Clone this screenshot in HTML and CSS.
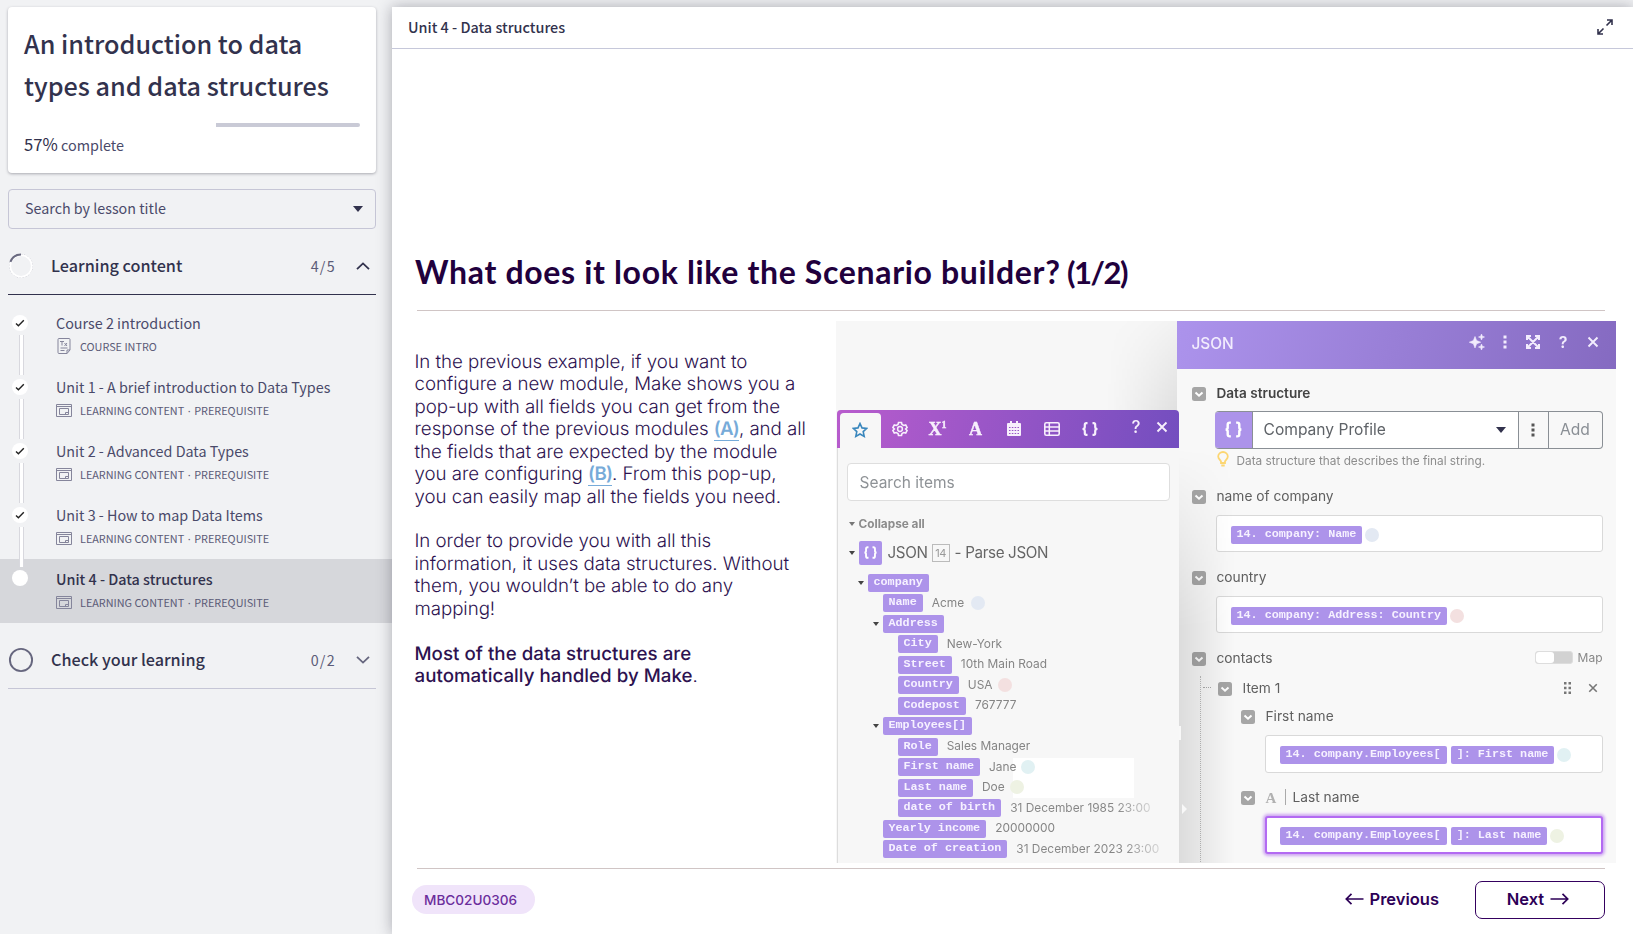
FILE: index.html
```
<!DOCTYPE html>
<html lang="en">
<head>
<meta charset="utf-8">
<title>An introduction to data types and data structures</title>
<link rel="stylesheet" href="styles.css">
</head>
<body>
<svg class="defs" aria-hidden="true">
  <symbol id="tick" viewBox="0 0 10 8"><path d="M1 4.4 3.4 6.7 8.8 1.2" fill="none" stroke="currentColor" stroke-width="1.4"/></symbol>
  <symbol id="lesson" viewBox="0 0 16 13"><path d="M.5.5h15v12H.5zM.5 2.5h15M3.5 4.500h9v6h-9zM9.500 10.500V8.500h3" fill="none" stroke="currentColor" stroke-width="1"/></symbol>
  <symbol id="check" viewBox="0 0 14 14"><rect width="14" height="14" rx="2.500" fill="#a6a6a6"/><path d="m3.500 5.500 3.500 3.200 3.500-3.200" fill="none" stroke="#fff" stroke-width="2"/></symbol>
  <symbol id="braces" viewBox="0 0 18 16"><path d="M6.500 1.500H5.500Q3.500 1.500 3.500 3.500V6Q3.500 8 1.500 8 3.500 8 3.500 10v2.500q0 2 2 2h1M11.500 1.500h1q2 0 2 2V6q0 2 2 2-2 0-2 2v2.500q0 2-2 2h-1" fill="none" stroke="currentColor" stroke-width="2.300"/></symbol>
  <symbol id="close" viewBox="0 0 12 12"><path d="m1.500 1.500 9 9m0-9-9 9" fill="none" stroke="currentColor" stroke-width="1.900"/></symbol>
  <symbol id="dots" viewBox="0 0 4 14"><path d="M.5.5h3v3h-3zM.5 5.500h3v3h-3zM.5 10.500h3v3h-3z" fill="currentColor"/></symbol>
</svg>
<div class="app">
  <aside class="sidebar">
    <section class="card">
      <h1>An introduction to data<br>types and data structures</h1>
      <div class="progress"><i></i></div>
      <p><b>57%</b> complete</p>
    </section>
    <div class="search"><span>Search by lesson title</span><i class="caret-big"></i></div>
    <div class="section first">
      <svg class="ring" viewBox="0 0 26 26"><circle cx="13" cy="13" r="11.500" fill="none" stroke="#b9b9c4" stroke-width="1" stroke-dasharray="1.500 1.500"/><circle cx="13" cy="13" r="10.800" fill="none" stroke="#fff" stroke-width="1.800"/><path d="M2.400 8.800A11.400 11.400 0 0 1 13 1.600" fill="none" stroke="#6a6a80" stroke-width="2"/></svg>
      <h2>Learning content</h2><span>4/5</span>
      <svg class="chev" viewBox="0 0 14 8"><path d="m1 7.200 6-5.800 6 5.800" fill="none" stroke="#32324d" stroke-width="1.800"/></svg>
    </div>
    <ul class="lessons">
      <li class="intro"><i class="dot"><svg><use href="#tick"/></svg></i><div><h3>Course 2 introduction</h3><p><svg class="doc" viewBox="0 0 14 16"><path d="M2 .5h10q1 0 1 1V12l-3 3.500H2q-1 0-1-1v-13q0-1 1-1zM13 12h-3v3.500M3 3.500h4M5 3.500v4M7.500 5l2.500 3m0-3-2.500 3M3.500 10h7M3.500 12.500h4" fill="none" stroke="currentColor"/></svg>COURSE INTRO</p></div></li>
      <li><i class="dot"><svg><use href="#tick"/></svg></i><div><h3>Unit 1 - A brief introduction to Data Types</h3><p><svg><use href="#lesson"/></svg>LEARNING CONTENT<em>·</em>PREREQUISITE</p></div></li>
      <li><i class="dot"><svg><use href="#tick"/></svg></i><div><h3>Unit 2 - Advanced Data Types</h3><p><svg><use href="#lesson"/></svg>LEARNING CONTENT<em>·</em>PREREQUISITE</p></div></li>
      <li><i class="dot"><svg><use href="#tick"/></svg></i><div><h3>Unit 3 - How to map Data Items</h3><p><svg><use href="#lesson"/></svg>LEARNING CONTENT<em>·</em>PREREQUISITE</p></div></li>
      <li class="active"><i class="dot"></i><div><h3>Unit 4 - Data structures</h3><p><svg><use href="#lesson"/></svg>LEARNING CONTENT<em>·</em>PREREQUISITE</p></div></li>
    </ul>
    <div class="section last">
      <svg class="ring" viewBox="0 0 26 26"><circle cx="13" cy="13" r="11.100" fill="none" stroke="#66667e" stroke-width="1.900"/></svg>
      <h2>Check your learning</h2><span>0/2</span>
      <svg class="chev" viewBox="0 0 14 8"><path d="m1 .8 6 5.800 6-5.800" fill="none" stroke="#66667e" stroke-width="1.800"/></svg>
    </div>
  </aside>
  <main class="main">
    <header class="bar"><span>Unit 4 - Data structures</span>
      <svg viewBox="0 0 16 16"><path d="M9.500 6.500 15 1M10 1h5v5M6.500 9.500 1 15M1 10v5h5" fill="none" stroke="#32324d" stroke-width="1.600"/></svg>
    </header>
    <div class="slide">
      <h2 class="title">What does it look like the Scenario builder? <span>(1/2)</span></h2>
      <div class="content">
        <div class="copy">
          <p>In the previous example, if you want to<br>configure a new module, Make shows you a<br>pop-up with all fields you can get from the<br>response of the previous modules <a>(A)</a>, and all<br>the fields that are expected by the module<br>you are configuring <a>(B)</a>. From this pop-up,<br>you can easily map all the fields you need.</p>
          <p>In order to provide you with all this<br>information, it uses data structures. Without<br>them, you wouldn’t be able to do any<br>mapping!</p>
          <p><b>Most of the data structures are<br>automatically handled by Make</b>.</p>
        </div>
        <div class="demo">
          <div class="shade"></div>
          <section class="window">
            <header class="w-head"><h3>JSON</h3>
              <svg width="16" height="16" viewBox="0 0 16 16"><path d="M6 2.500 7.600 6.600 11.700 8.200 7.600 9.800 6 14 4.400 9.800.300 8.200 4.400 6.600zM12.500 0l.8 2.200 2.200.8-2.200.8-.8 2.200-.8-2.200L9.500 3l2.200-.8zM12.500 10l.8 2.200 2.200.8-2.200.8-.8 2.200-.8-2.200-2.200-.8 2.200-.8z" fill="currentColor" stroke="currentColor" stroke-width=".6"/></svg>
              <svg width="4" height="14"><use href="#dots"/></svg>
              <svg width="14" height="14" viewBox="0 0 14 14"><path d="M1 5V1h4M9 1h4v4M13 9v4H9M5 13H1V9M1.500 1.500l11 11m0-11-11 11" fill="none" stroke="currentColor" stroke-width="2"/></svg>
              <b>?</b>
              <svg width="12" height="12"><use href="#close"/></svg>
            </header>
            <div class="w-body">
              <div class="label strong"><svg><use href="#check"/></svg>Data structure</div>
              <div class="picker"><i><svg width="19" height="17"><use href="#braces"/></svg></i><span>Company Profile<u class="caret-big"></u></span><em><svg width="4" height="14"><use href="#dots"/></svg></em><b>Add</b></div>
              <div class="hint"><svg width="12" height="16" viewBox="0 0 12 16"><path d="M4 12v-1.500C3.500 9 1.200 8 1.200 5.500a4.800 4.500 0 0 1 9.600 0C10.800 8 8.500 9 8 10.500V12zM4.300 14.500h3.400" fill="none" stroke="#fcd672" stroke-width="1.800"/></svg>Data structure that describes the final string.</div>
              <div class="label l-name"><svg><use href="#check"/></svg>name of company</div>
              <div class="input"><code>14. company: Name</code><i class="pt blue"></i></div>
              <div class="label l-country"><svg><use href="#check"/></svg>country</div>
              <div class="input"><code>14. company: Address: Country</code><i class="pt red"></i></div>
              <div class="label l-contacts"><svg><use href="#check"/></svg>contacts<span class="toggle"><i></i></span><small>Map</small></div>
              <div class="nest">
                <div class="label l-item"><svg><use href="#check"/></svg>Item 1<svg class="drag" viewBox="0 0 7 12"><path d="M0 0h2.500v2.500H0zM4.500 0H7v2.500H4.500zM0 4.700h2.500v2.500H0zM4.500 4.700H7v2.500H4.500zM0 9.400h2.500v2.500H0zM4.500 9.400H7v2.500H4.500z" fill="#777"/></svg><svg class="rm"><use href="#close"/></svg></div>
                <div class="label l-first"><svg><use href="#check"/></svg>First name</div>
                <div class="input deep"><code>14. company.Employees[</code><code>]: First name</code><i class="pt cyan"></i></div>
                <div class="label l-last"><svg><use href="#check"/></svg><span class="glyph">A</span>Last name</div>
                <div class="input deep focus"><code>14. company.Employees[</code><code>]: Last name</code><i class="pt green"></i></div>
              </div>
            </div>
          </section>
          <div class="cast"></div>
          <svg class="marks" viewBox="0 0 8 90"><path d="M0 0h2v14H0zM3 78l5 5-5 5z" fill="#f8f8f8"/></svg>
          <section class="picker-pop">
            <header class="tabs">
              <span class="on"><svg width="16" height="16" viewBox="0 0 16 16"><path d="m8 1.500 2 4.400 4.700.5-3.500 3.200 1 4.800L8 12l-4.200 2.400 1-4.800L1.300 6.400 6 5.900z" fill="none" stroke="#3a87bd" stroke-width="1.600"/></svg></span>
              <span><svg width="16" height="16" viewBox="0 0 16 16"><path d="M6.500 1.500h3l.5 2 1.700 1 2-.6 1.400 2.600L13.600 8l1.500 1.500-1.400 2.600-2-.6-1.700 1-.5 2h-3l-.5-2-1.700-1-2 .6L.9 9.500 2.400 8 .9 6.500l1.400-2.600 2 .6 1.700-1z" fill="none" stroke="currentColor" stroke-width="1.600"/><circle cx="8" cy="8" r="2.400" fill="none" stroke="currentColor" stroke-width="1.500"/></svg></span>
              <span class="serif">X<sup>1</sup></span>
              <span class="serif">A</span>
              <span><svg width="14" height="15" viewBox="0 0 14 15"><path d="M0 3q0-1 1-1h2V0h2v2h4V0h2v2h2q1 0 1 1v11q0 1-1 1H1q-1 0-1-1z" fill="currentColor"/><path d="M2 6.500h10M2 9.500h10M2 12.500h10" stroke="#9856c6" stroke-width="1.200" stroke-dasharray="1.500 1.333"/></svg></span>
              <span><svg width="16" height="14" viewBox="0 0 16 14"><rect x=".8" y=".8" width="14.400" height="12.400" rx="1.500" fill="none" stroke="currentColor" stroke-width="1.600"/><path d="M5.300 1v12M1 5h14M1 9h14" stroke="currentColor" stroke-width="1.500"/></svg></span>
              <span><svg width="18" height="14" viewBox="0 0 18 14"><path d="M6.500 1.200H5.300Q3.800 1.200 3.800 2.700V5Q3.800 7 1.500 7 3.800 7 3.800 9v2.300q0 1.500 1.500 1.500h1.200M11.500 1.200h1.200q1.500 0 1.500 1.500V5q0 2 2.300 2-2.300 0-2.300 2v2.300q0 1.500-1.500 1.500h-1.200" fill="none" stroke="currentColor" stroke-width="2.200"/></svg></span>
              <b>?</b><svg width="12" height="12"><use href="#close"/></svg>
            </header>
            <div class="find">Search items</div>
            <div class="collapse"><i class="caret"></i>Collapse all</div>
            <div class="module"><i class="caret"></i><i class="sq"><svg width="17" height="13"><use href="#braces"/></svg></i>JSON<small>14</small>- Parse JSON</div>
            <div class="patch"></div>
            <ul class="tree">
              <li><i class="caret"></i><code>company</code></li>
              <li class="d1"><code>Name</code><span>Acme</span><i class="pt blue sp"></i></li>
              <li class="d1"><i class="caret"></i><code>Address</code></li>
              <li class="d2"><code>City</code><span>New-York</span></li>
              <li class="d2"><code>Street</code><span>10th Main Road</span></li>
              <li class="d2"><code>Country</code><span>USA</span><i class="pt red"></i></li>
              <li class="d2"><code>Codepost</code><span>767777</span></li>
              <li class="d1"><i class="caret"></i><code>Employees[]</code></li>
              <li class="d2"><code>Role</code><span>Sales Manager</span></li>
              <li class="d2"><code>First name</code><span>Jane</span><i class="pt cyan"></i></li>
              <li class="d2"><code>Last name</code><span>Doe</span><i class="pt green"></i></li>
              <li class="d2"><code>date of birth</code><span class="fade">31 December 1985 23:00</span></li>
              <li class="d1"><code>Yearly income</code><span>20000000</span></li>
              <li class="d1"><code>Date of creation</code><span class="fade">31 December 2023 23:00</span></li>
            </ul>
          </section>
        </div>
      </div>
      <footer class="foot">
        <span class="badge">MBC02U0306</span>
        <span class="prev"><svg viewBox="0 0 19 12"><path d="M18.500 6H1.500M6.500.8 1.300 6l5.200 5.200" fill="none" stroke="currentColor" stroke-width="1.700"/></svg>Previous</span>
        <span class="next">Next<svg viewBox="0 0 19 12"><path d="M.5 6h17M12.500.8 17.700 6l-5.200 5.200" fill="none" stroke="currentColor" stroke-width="1.700"/></svg></span>
      </footer>
    </div>
  </main>
</div>
</body>
</html>
```
FILE: styles.css
```
* { box-sizing: border-box; margin: 0; padding: 0; }
body { width: 1633px; height: 934px; overflow: hidden; background: #f1f2f4; font-family: "Noto Sans CJK SC", "Noto Sans", sans-serif; color: #32324d; }
i, em { font-style: normal; }
ul { list-style: none; }
svg { display: block; flex: none; }
.defs { position: absolute; width: 0; height: 0; }
.app { display: flex; height: 934px; }

/* Sidebar */
.sidebar { width: 392px; flex: none; padding-top: 7px; }
.card { width: 368px; height: 166px; margin-left: 8px; padding: 15px 16px 0; background: #fff; border-radius: 4px; box-shadow: 0 1px 3px rgba(33, 33, 52, .35); }
.card h1 { font-size: 25.2px; line-height: 42px; font-weight: 500; white-space: nowrap; }
.progress { height: 4px; margin-top: 17px; display: flex; justify-content: flex-end; }
.progress i { width: 144px; height: 4px; background: #c9cad6; border-radius: 0 2px 2px 0; }
.card p { margin-top: 4px; font-size: 14.4px; line-height: 26px; color: #4a4a6a; }
.card b { font-size: 16.6px; font-weight: 400; color: #32324d; }
.search { display: flex; align-items: center; justify-content: space-between; width: 368px; height: 40px; margin: 16px 0 0 8px; padding: 0 12px 0 16px; border: 1px solid #c6c6d6; border-radius: 4px; font-size: 14.3px; color: #4a4a6a; }
.search span { padding-bottom: 3px; }
.caret-big { width: 0; height: 0; border: 5px solid transparent; border-top: 6px solid #32324d; border-bottom: 0; }
.section { display: flex; align-items: center; width: 368px; margin-left: 8px; }
.section.first { height: 66px; padding-top: 8px; border-bottom: 1px solid #32324d; }
.section.last { height: 66px; padding-top: 8px; border-bottom: 1px solid #c6c6d6; }
.ring { width: 26px; height: 26px; }
.section h2 { flex: 1; margin: -2px 0 0 17px; font-size: 16.2px; font-weight: 500; line-height: 24px; }
.section span { font-size: 14.3px; letter-spacing: 1.3px; color: #5c5c78; }
.chev { width: 14px; height: 8px; margin: 0 6px 0 20px; }
.lessons { padding-top: 8px; }
.lessons li { position: relative; display: flex; height: 64px; padding: 7px 0 0 12px; color: #4a4a6a; }
.lessons li:not(.active)::after { content: ""; position: absolute; left: 19px; top: 32px; width: 3px; height: 40px; z-index: 1; background: #fff; border: solid #d8d8de; border-width: 0 1px; }
.lessons li.active { background: #d6d7db; }
.dot { display: grid; place-items: center; width: 16px; height: 16px; margin: 5px 28px 0 0; border-radius: 50%; background: #fff; color: #222; }
.active .dot { margin-top: 4px; }
.dot svg { width: 10px; height: 8px; }
.lessons h3 { margin-bottom: 1px; font-size: 14.35px; font-weight: 400; line-height: 25px; white-space: nowrap; }
.active h3 { font-weight: 500; color: #32324d; }
.lessons p { display: flex; align-items: center; height: 20px; font-size: 10.85px; white-space: pre; color: #5b5b77; }
.lessons p svg { width: 16px; height: 13px; margin-right: 8px; color: #85859b; }
.lessons p .doc { width: 14px; height: 16px; margin: 0 9px 0 1px; }
.lessons em { flex: none; width: 10px; text-align: center; font-family: "Noto Sans", sans-serif; }

/* Main */
.main { position: relative; flex: 1; min-width: 0; margin-top: 7px; background: #fff; box-shadow: 0 0 14px rgba(33, 33, 52, .35); }
.bar { display: flex; align-items: center; justify-content: space-between; height: 42px; padding: 0 20px 0 16px; border-bottom: 1px solid #c6c8da; font-size: 14.4px; font-weight: 500; }
.bar span { padding-bottom: 2px; }
.bar svg { width: 16px; height: 16px; margin-top: -1px; }
.slide { padding: 196px 28px 0 23px; font-family: Inter, "Liberation Sans", sans-serif; }
.title { height: 66px; padding-top: 7px; font-family: Lato, Inter, sans-serif; font-size: 32px; line-height: 40px; font-weight: 700; letter-spacing: .66px; color: #21003d; white-space: nowrap; border-bottom: 1px solid #d0c5c5; border-image: linear-gradient(90deg, transparent 3px, #d0c5c5 3px) 1; }
.title span { margin-left: -2px; font-size: 31px; letter-spacing: -1.5px; }
.content { display: flex; height: 558px; border-bottom: 1px solid; border-image: linear-gradient(90deg, transparent 3px, #d0c5c5 3px) 1; }
.copy { width: 421px; flex: none; margin-left: -.5px; padding-top: 40px; font-size: 18.7px; line-height: 22.43px; font-weight: 300; letter-spacing: -.05px; color: #2d1250; white-space: nowrap; text-rendering: geometricPrecision; }
.copy p { margin-bottom: 22.43px; }
.copy b { font-weight: 500; letter-spacing: .04px; }
.copy a { color: #77abd9; font-weight: 600; letter-spacing: -.8px; border-bottom: 1.5px solid #77abd9; }

/* Product view */
.demo { position: relative; flex: none; width: 780px; height: 542px; margin-top: 9.5px; background: #f7f7f7; overflow: hidden; filter: blur(.4px); }
.shade { position: absolute; left: 271px; top: 0; width: 70px; height: 542px; background: linear-gradient(90deg, transparent, rgba(0,0,0,.1)); -webkit-mask: linear-gradient(160deg, transparent, #000 120px); }
.window { position: absolute; left: 341px; top: 0; width: 439px; height: 542px; background: #f8f8f8; }
.w-head { display: flex; align-items: center; height: 48px; padding: 0 17px 5px 15px; background: linear-gradient(105deg, #ac93ec, #856ac1); color: #f2ecfd; }
.w-head h3 { flex: 1; padding-top: 3px; font-size: 15.4px; font-weight: 500; }
.w-head svg:nth-of-type(2) { margin: 0 19px 0 18px; }
.w-head b { margin: 0 19px 0 19px; font-size: 16px; font-weight: 600; }
.w-body { padding: 12px 13px 0 38px; position: relative; }
.label { display: flex; align-items: center; height: 24px; margin-left: -23px; font-size: 13.75px; color: #606060; }
.label > svg:first-child { width: 14px; height: 14px; margin: 2px 11px 0 0; }
.label.strong { font-size: 13.6px; font-weight: 600; color: #444; }
.picker { display: flex; height: 38px; margin-top: 6px; border: 1.5px solid #8a8f95; border-left: 0; border-radius: 4px; font-size: 15.6px; color: #5f6368; overflow: hidden; }
.picker i { display: grid; place-items: center; width: 37px; margin: -2px 0; background: #ac93ea; color: #fff; }
.picker span { display: flex; flex: 1; align-items: center; justify-content: space-between; padding: 0 12px 0 11px; background: #fff; border-left: 1px solid #8a8f95; }
.picker em { display: grid; place-items: center; width: 30px; border-left: 1.5px solid #8a8f95; color: #555; }
.picker b { display: grid; place-items: center; width: 54px; font-weight: 400; border-left: 1.5px solid #8a8f95; color: #8a8f95; }
.hint { display: flex; align-items: center; gap: 8px; height: 24px; padding: 0 0 0 2px; font-size: 11.8px; color: #8d8d8d; white-space: nowrap; }
.hint svg { margin-top: -3px; }
.l-name { margin-top: 11px; }
.input { display: flex; align-items: center; gap: 4px; height: 37px; margin: 7px 0 0 1px; padding: 3px 0 0 14px; background: #fff; border: 1px solid #d9d9d9; border-radius: 3px; }
code { display: inline-block; height: 18px; padding: 0 6px; font: bold 11.75px/17.5px "Liberation Mono", monospace; color: #f6f1ff; background: #ad93ea; border-radius: 2px; white-space: pre; }
.input code + .pt { margin-left: -1px; }
.pt { width: 14px; height: 14px; border-radius: 50%; }
.blue { background: #e3e9f3; } .red { background: #f3e0e0; } .cyan { background: #e1f1f3; } .green { background: #eef2e3; }
.l-country { margin-top: 13px; }
.l-contacts { margin-top: 13px; }
.toggle { width: 38px; height: 13px; margin-left: auto; border-radius: 3px; background: #d2d2d2; border: 1px solid #ddd; }
.toggle i { display: block; width: 18px; height: 11px; background: #fff; border-radius: 3px; }
.label small { margin-left: 5px; font-size: 12px; color: #888; }
.nest { position: relative; height: 186px; margin-left: -15px; margin-top: 7px; padding-left: 40px; border-left: 1.5px dotted #bbb; }
.nest::before { content: ""; position: absolute; left: 2px; top: 11px; width: 8px; border-top: 1px dotted #aaa; }
.l-item { height: 24px; margin-top: -1px; }
.drag { width: 7px; height: 12px; margin-left: auto; }
.rm { width: 10px; height: 10px; margin: 0 5px 0 17px; color: #777; }
.l-first { margin: 4px 0 0; }
.nest .input { height: 38px; margin: 7px 0 0 24px; }
.l-last { margin: 12px 0 0; }
.glyph { width: 20px; height: 16px; margin-right: 7px; font: bold 15px/18px "Liberation Serif", serif; color: #b1b1b1; border-right: 1px solid #aaa; }
.nest .focus { border: 2px solid #b36af2; box-shadow: 0 0 3px 2px #cfa8f2; padding-left: 13px; }
.cast { position: absolute; left: 343px; top: 127px; width: 56px; height: 415px; background: linear-gradient(90deg, rgba(0,0,0,.11), transparent); -webkit-mask: linear-gradient(#0000, #000 180px); }
.marks { position: absolute; left: 343px; top: 405px; width: 8px; height: 90px; }
.picker-pop { position: absolute; left: 1px; top: 89px; width: 342px; height: 453px; background: #f7f7f7; border-left: 1px solid #ddd; border-radius: 4px 4px 0 0; }
.tabs { display: flex; align-items: center; height: 38px; margin-left: -1px; padding: 0 11px 0 3px; border-radius: 4px 4px 0 0; background: linear-gradient(105deg, #b85ccd, #734ebf); color: #f7effc; }
.tabs span { display: grid; place-items: center; width: 38px; height: 38px; flex: none; }
.tabs .on { width: 41px; height: 35px; margin-top: 3px; background: #f7f7f7; border-radius: 4px 4px 0 0; }
.tabs .serif { display: block; text-align: center; font: bold 18px/38px "Liberation Serif", serif; -webkit-text-stroke: .4px currentColor; }
.tabs sup { font-size: 10px; line-height: 0; }
.tabs b { margin: -4px 15px 0 auto; font-size: 17px; font-weight: 500; }
.tabs > svg { margin-top: -3px; }
.find { height: 38px; margin: 15px 9px 0 9px; padding-left: 12px; border: 1.5px solid #dedede; border-radius: 4px; background: #fff; font-size: 15.5px; line-height: 37px; color: #8e9296; }
.collapse { display: flex; align-items: center; height: 20px; margin: 13px 0 0 11px; font-size: 11.8px; font-weight: 700; color: #8c8c8c; }
.caret { width: 0; height: 0; border: 3px solid transparent; border-top: 4px solid #444; border-bottom: 0; }
.collapse .caret { margin-right: 4px; border-top-color: #777; }
.module { display: flex; align-items: center; height: 24px; margin: 7px 0 0 11px; font-size: 15.2px; letter-spacing: -.35px; color: #666; }
.sq { display: grid; place-items: center; width: 23px; height: 24px; margin: 0 6px 0 4px; border-radius: 2px; background: #ac93ea; color: #fff; }
.module small { width: 18px; height: 18px; margin: 0 5px 0 4px; border: 1px solid #bbb; font-size: 11px; line-height: 16px; text-align: center; color: #999; }
.patch { position: absolute; left: 175px; top: 348px; width: 121px; height: 40px; background: #fff; }
.tree { position: relative; margin-top: 8px; }
.tree li { display: flex; align-items: center; height: 20.5px; padding-left: 30px; font-size: 11.9px; color: #858585; white-space: pre; }
.tree .d1 { padding-left: 45px; }
.tree .d2 { padding-left: 60px; }
.tree .caret { margin: 0 4px 0 -10px; }
.tree span { margin: -2px 5px 0 9px; }
.tree .pt { margin-top: -1px; }
.tree .sp { margin-left: 2px; }
.fade { background: linear-gradient(90deg, #858585 75%, #d5d5d5); -webkit-background-clip: text; background-clip: text; color: transparent; }

/* Footer */
.foot { display: flex; align-items: center; height: 61px; margin-left: -3px; color: #2d0057; font-weight: 600; font-size: 16.5px; }
.badge { width: 123px; height: 29px; padding-left: 12px; border-radius: 15px; background: #f0e4fa; font-size: 13.6px; line-height: 30px; font-weight: 500; color: #6b2d9c; }
.foot svg { width: 19px; height: 12px; }
.prev { display: flex; align-items: center; gap: 6px; margin: -1px 36px 0 auto; }
.next { display: flex; align-items: center; justify-content: center; gap: 6px; width: 130px; height: 38px; padding: 0 4px 2px 0; border: 1.5px solid #34005e; border-radius: 7px; }
```
